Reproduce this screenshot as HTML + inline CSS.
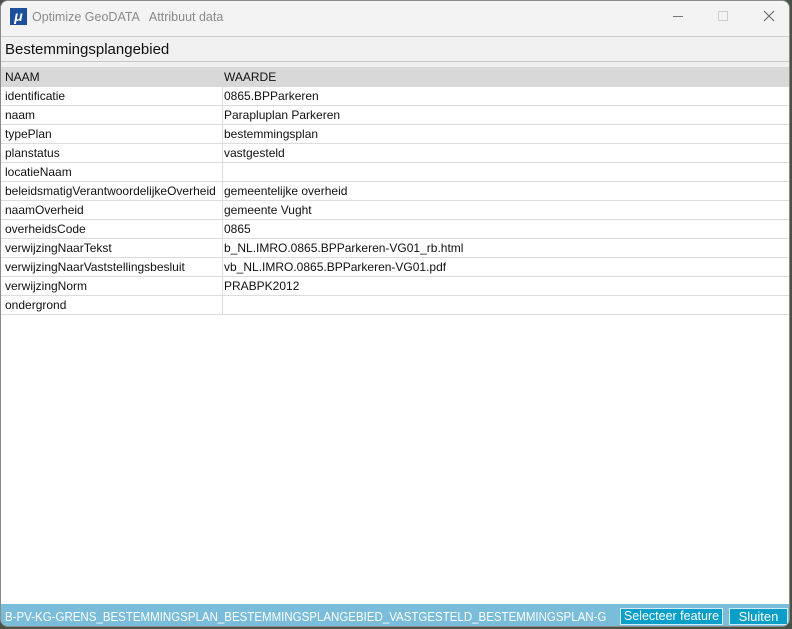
<!DOCTYPE html>
<html><head><style>
*{margin:0;padding:0;box-sizing:border-box}
body{width:792px;height:629px;background:#4a5245;font-family:"Liberation Sans",sans-serif;position:relative;overflow:hidden}
.win{position:absolute;left:0;top:0;width:790px;height:627px;background:#fff;border-radius:8px;overflow:hidden;border:1px solid #8a8a8a}
.title{position:absolute;left:0;top:0;width:100%;height:36px;background:#f3f3f3;border-bottom:1px solid #cfcfcf}
.title .t{position:absolute;left:31px;top:9px;font-size:12.5px;color:#8a8a8a}
.logo{position:absolute;left:9px;top:7px;width:17px;height:17px;background:#1d4f9c;color:#fff;font-size:14px;font-style:italic;font-weight:bold;line-height:17px;text-align:center}
.hdr{position:absolute;left:0;top:36px;width:100%;height:25px;background:#f0f0f0;border-bottom:1px solid #c8c8c8;font-size:15px;padding:4px 4px;color:#111}
.gap{position:absolute;left:0;top:61px;width:100%;height:5px;background:#f0f0f0}
.tbl{position:absolute;left:0;top:66px;width:790px;font-size:12px;color:#111}
.r{height:19px;border-bottom:1px solid #dcdcdc;position:relative;white-space:nowrap;line-height:18px}
.r span{position:absolute;top:0}
.r .a{left:4px}.r .b{left:223px}
.r:before{content:"";position:absolute;left:221px;top:0;width:1px;height:19px;background:#dcdcdc}
.h{height:20px;background:#d8d8d8;border:none;line-height:20px}
.h:before{display:none}
.bar{position:absolute;left:0;top:603px;width:100%;height:24px;background:#7abddb;color:#fff;font-size:13px}
.bar .n{position:absolute;left:4px;top:5px;transform:scaleX(0.885);transform-origin:0 0;white-space:nowrap}
.btn{position:absolute;top:4px;height:17px;background:#0a9fc9;border:1px solid #d0ecf6;color:#fff;font-size:13px;line-height:15px;text-align:center;white-space:nowrap}
</style></head><body>
<div class="win">
<div class="title"><div class="logo">μ</div><div class="t">Optimize GeoDATA &nbsp; Attribuut data</div>
<div style="position:absolute;left:672px;top:15px;width:10px;height:1px;background:#777"></div>
<div style="position:absolute;left:717px;top:10px;width:10px;height:10px;border:1px solid #ccc"></div>
<svg style="position:absolute;left:762px;top:9px" width="12" height="12"><path d="M1 1L11 11M11 1L1 11" stroke="#666" stroke-width="1.1"/></svg>
</div>
<div class="hdr">Bestemmingsplangebied</div>
<div class="gap"></div>
<div class="tbl">
<div class="r h"><span class="a">NAAM</span><span class="b">WAARDE</span></div>
<div class="r"><span class="a">identificatie</span><span class="b">0865.BPParkeren</span></div>
<div class="r"><span class="a">naam</span><span class="b">Parapluplan Parkeren</span></div>
<div class="r"><span class="a">typePlan</span><span class="b">bestemmingsplan</span></div>
<div class="r"><span class="a">planstatus</span><span class="b">vastgesteld</span></div>
<div class="r"><span class="a">locatieNaam</span><span class="b"></span></div>
<div class="r"><span class="a">beleidsmatigVerantwoordelijkeOverheid</span><span class="b">gemeentelijke overheid</span></div>
<div class="r"><span class="a">naamOverheid</span><span class="b">gemeente Vught</span></div>
<div class="r"><span class="a">overheidsCode</span><span class="b">0865</span></div>
<div class="r"><span class="a">verwijzingNaarTekst</span><span class="b">b_NL.IMRO.0865.BPParkeren-VG01_rb.html</span></div>
<div class="r"><span class="a">verwijzingNaarVaststellingsbesluit</span><span class="b">vb_NL.IMRO.0865.BPParkeren-VG01.pdf</span></div>
<div class="r"><span class="a">verwijzingNorm</span><span class="b">PRABPK2012</span></div>
<div class="r"><span class="a">ondergrond</span><span class="b"></span></div>
</div>
<div class="bar"><div class="n">B-PV-KG-GRENS_BESTEMMINGSPLAN_BESTEMMINGSPLANGEBIED_VASTGESTELD_BESTEMMINGSPLAN-G</div>
<div class="btn" style="left:619px;width:103px;font-size:12.5px">Selecteer feature</div>
<div class="btn" style="left:728px;width:59px">Sluiten</div></div>
</div>
</body></html>
